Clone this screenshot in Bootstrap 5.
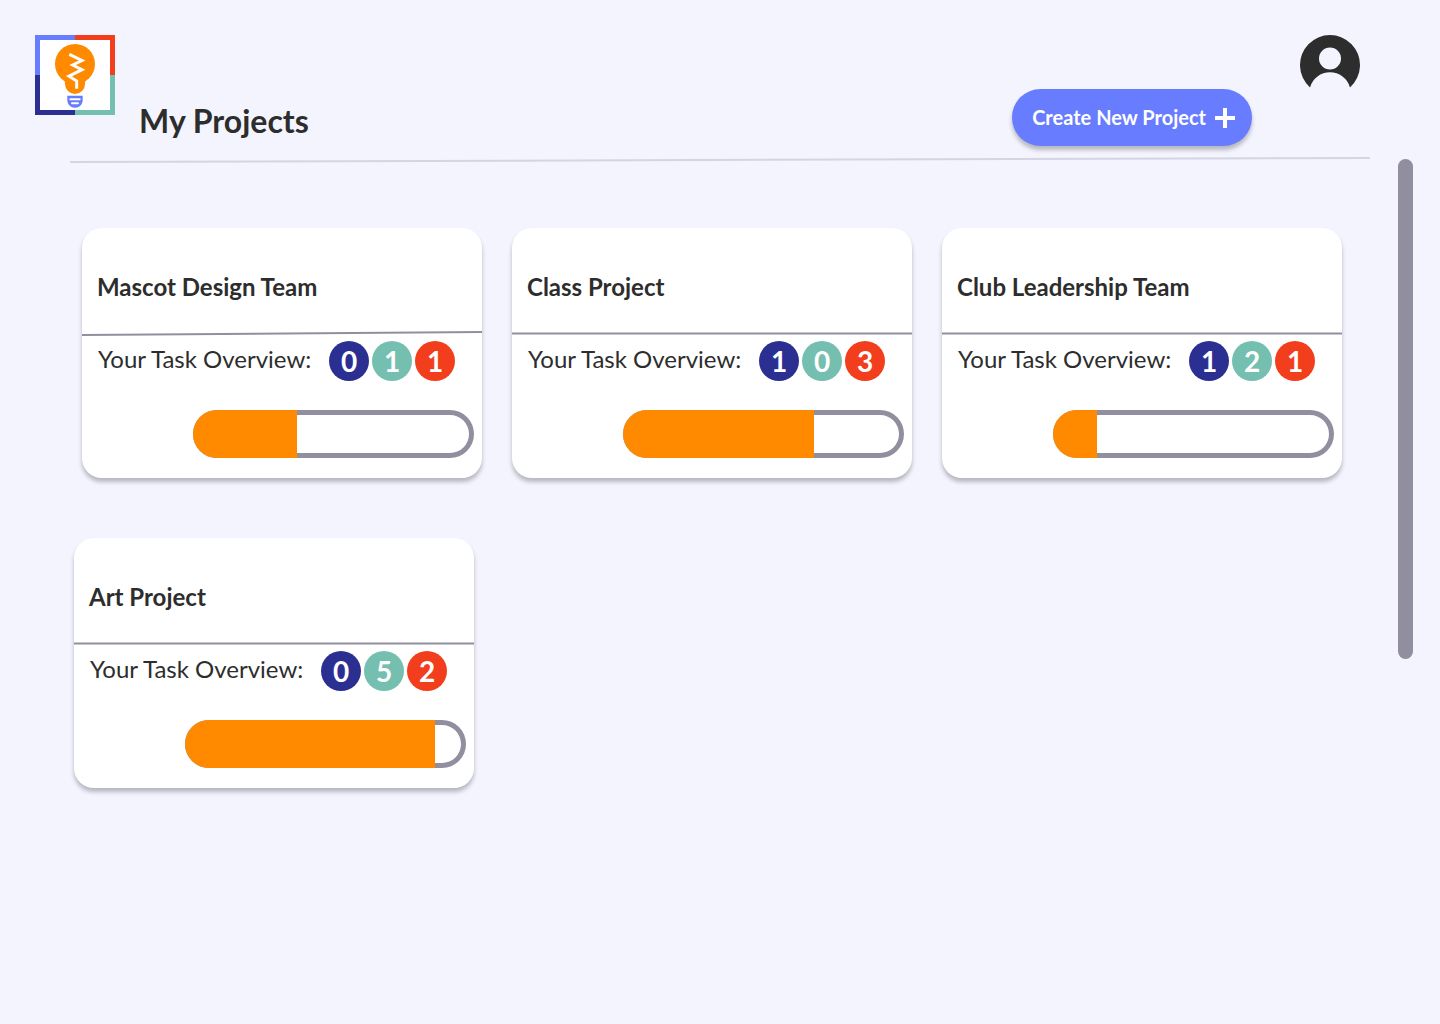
<!DOCTYPE html>
<html lang="en">
<head>
<meta charset="utf-8">
<meta name="viewport" content="width=device-width, initial-scale=1">
<title>My Projects</title>
<link href="https://cdn.jsdelivr.net/npm/bootstrap@5.3.0/dist/css/bootstrap.min.css" rel="stylesheet">
<style>
  :root { --ink: #2d2d2d; --periwinkle: #677cff; --indigo: #2c2f92; --teal: #75bfb0; --red: #f23e1c; --orange: #ff8a00; --slate: #918f9f; }
  body { background: #f4f4ff; color: var(--ink); font-family: Lato, "Liberation Sans", sans-serif; }
  .top-bar { padding: 35px 80px 10px 35px; }
  .page-title { margin-left: 24px; font-size: 32px; line-height: 50px; font-weight: 700; }
  .create-btn { gap: 9px; height: 57px; padding: 0 17px 0 20px; margin: 54px 48px 0 auto; border-radius: 29px; color: #fff; background: var(--periwinkle); font-size: 20px; line-height: 24px; font-weight: 700; box-shadow: 0 4px 4px rgba(0, 0, 0, .25); }
  .create-btn:hover { color: #fff; background: #5468f0; }
  .create-label { padding-bottom: 2px; }
  .rule-wrap { padding: 0 28px 0 70px; }
  .top-rule { height: 8px; }
  .project-list { padding: 64px 56px 60px 82px; }
  .project-list + .project-list { padding: 0 64px 60px 74px; }
  .project-list .row { --bs-gutter-x: 30px; --bs-gutter-y: 30px; }
  .project { border: 0; border-radius: 20px; box-shadow: 0 4px 4px rgba(0, 0, 0, .25); padding-bottom: 20px; }
  .project-name { height: 102px; padding: 44px 15px 0; font-size: 24px; line-height: 30px; font-weight: 700; }
  .project-rule { height: 6px; }
  .overview { padding: 5px 27px 0 16px; }
  .overview-label { font-size: 24px; line-height: 36px; }
  .counts { gap: 3px; }
  .count { width: 40px; height: 40px; border-radius: 50%; color: #fff; font-size: 28px; line-height: 40px; font-weight: 700; text-align: center; }
  .count-todo { background: var(--indigo); }
  .count-doing { background: var(--teal); }
  .count-late { background: var(--red); }
  .project .progress { height: 48px; margin: 29px 8px 0 111px; border-radius: 24px; background: #fff; box-shadow: inset 0 0 0 5px var(--slate); }
  .project .progress-bar { background: var(--orange); }
  .scroll-thumb { width: 15px; height: 500px; margin: 3px 27px 0 0; border-radius: 8px; background: var(--slate); }
</style>
</head>
<body>
<header class="top-bar d-flex align-items-start">
  <a href="#" aria-label="Home" class="d-block">
    <svg class="d-block" width="80" height="80" viewBox="0 0 80 80" aria-hidden="true">
      <path fill="#677cff" d="M0 0h40v40H0z"/><path fill="#f23e1c" d="M40 0h40v40H40z"/>
      <path fill="#2c2f92" d="M0 40h40v40H0z"/><path fill="#75bfb0" d="M40 40h40v40H40z"/>
      <path fill="#fff" d="M5 5h70v70H5z"/>
      <circle cx="40" cy="29" r="20" fill="#ff8a00"/>
      <path fill="#ff8a00" d="M28 43q2 2 2 6a10 10 0 0 0 20 0q0-4 2-6z"/>
      <path fill="none" stroke="#fff" stroke-width="3" d="M34.3 19.3 47 25.5 37.7 30 47 34.7 34 41.2l7.7 4.8v7.7"/>
      <path fill="#677cff" d="M32.3 60.7h15.4V65c0 4.5-3.4 7.7-7.7 7.7s-7.7-3.2-7.7-7.7z"/>
      <path stroke="#fff" stroke-width="2" stroke-linecap="round" d="M35.3 64.3h9.4M37 68.2h6"/>
    </svg>
  </a>
  <h1 class="page-title align-self-end mb-0">My Projects</h1>
  <button type="button" class="btn create-btn border-0 d-flex align-items-center">
    <span class="create-label">Create New Project</span>
    <svg width="20" height="20" viewBox="0 0 20 20" aria-hidden="true"><path fill="none" stroke="#fff" stroke-width="4" d="M10 0v20M0 10h20"/></svg>
  </button>
  <a href="#" aria-label="Your profile" class="d-block">
    <svg class="d-block" width="60" height="60" viewBox="0 0 60 60" aria-hidden="true">
      <path fill="#2d2d2d" fill-rule="evenodd" d="M10 52.4a30 30 0 1 1 40 0A20.8 20.8 0 0 0 10 52.4zM30 12.5a11 11 0 1 0 0 22 11 11 0 0 0 0-22z"/>
    </svg>
  </a>
</header>

<div class="d-flex align-items-start">
  <main class="flex-grow-1">
    <div class="rule-wrap">
      <svg class="top-rule d-block w-100" viewBox="0 0 1300 8" preserveAspectRatio="none" aria-hidden="true"><path stroke="#d4d4e2" stroke-width="2" d="M0 6 1300 2"/></svg>
    </div>

    <section class="project-list" aria-label="Team projects">
      <div class="row row-cols-1 row-cols-lg-3">
        <div class="col">
          <article class="card project">
            <h2 class="project-name mb-0">Mascot Design Team</h2>
            <svg class="project-rule w-100" viewBox="0 0 400 6" preserveAspectRatio="none" aria-hidden="true"><path stroke="#918f9f" stroke-width="2" d="M0 5 400 2"/></svg>
            <div class="overview d-flex justify-content-between">
              <span class="overview-label">Your Task Overview:</span>
              <div class="counts d-flex"><span class="count count-todo">0</span><span class="count count-doing">1</span><span class="count count-late">1</span></div>
            </div>
            <div class="progress" role="progressbar" aria-label="Mascot Design Team progress" aria-valuenow="37" aria-valuemin="0" aria-valuemax="100"><div class="progress-bar" style="width: 37%"></div></div>
          </article>
        </div>
        <div class="col">
          <article class="card project">
            <h2 class="project-name mb-0">Class Project</h2>
            <svg class="project-rule w-100" viewBox="0 0 400 6" preserveAspectRatio="none" aria-hidden="true"><path stroke="#918f9f" stroke-width="2" d="M0 3.5h400"/></svg>
            <div class="overview d-flex justify-content-between">
              <span class="overview-label">Your Task Overview:</span>
              <div class="counts d-flex"><span class="count count-todo">1</span><span class="count count-doing">0</span><span class="count count-late">3</span></div>
            </div>
            <div class="progress" role="progressbar" aria-label="Class Project progress" aria-valuenow="68" aria-valuemin="0" aria-valuemax="100"><div class="progress-bar" style="width: 68%"></div></div>
          </article>
        </div>
        <div class="col">
          <article class="card project">
            <h2 class="project-name mb-0">Club Leadership Team</h2>
            <svg class="project-rule w-100" viewBox="0 0 400 6" preserveAspectRatio="none" aria-hidden="true"><path stroke="#918f9f" stroke-width="2" d="M0 3.5h400"/></svg>
            <div class="overview d-flex justify-content-between">
              <span class="overview-label">Your Task Overview:</span>
              <div class="counts d-flex"><span class="count count-todo">1</span><span class="count count-doing">2</span><span class="count count-late">1</span></div>
            </div>
            <div class="progress" role="progressbar" aria-label="Club Leadership Team progress" aria-valuenow="16" aria-valuemin="0" aria-valuemax="100"><div class="progress-bar" style="width: 15.7%"></div></div>
          </article>
        </div>
      </div>
    </section>

    <section class="project-list" aria-label="More projects">
      <div class="row row-cols-1 row-cols-lg-3">
        <div class="col">
          <article class="card project">
            <h2 class="project-name mb-0">Art Project</h2>
            <svg class="project-rule w-100" viewBox="0 0 400 6" preserveAspectRatio="none" aria-hidden="true"><path stroke="#918f9f" stroke-width="2" d="M0 3.5h400"/></svg>
            <div class="overview d-flex justify-content-between">
              <span class="overview-label">Your Task Overview:</span>
              <div class="counts d-flex"><span class="count count-todo">0</span><span class="count count-doing">5</span><span class="count count-late">2</span></div>
            </div>
            <div class="progress" role="progressbar" aria-label="Art Project progress" aria-valuenow="89" aria-valuemin="0" aria-valuemax="100"><div class="progress-bar" style="width: 89%"></div></div>
          </article>
        </div>
      </div>
    </section>
  </main>
  <div class="scroll-thumb flex-shrink-0" aria-hidden="true"></div>
</div>
<script src="https://cdn.jsdelivr.net/npm/bootstrap@5.3.0/dist/js/bootstrap.bundle.min.js"></script>
</body>
</html>
